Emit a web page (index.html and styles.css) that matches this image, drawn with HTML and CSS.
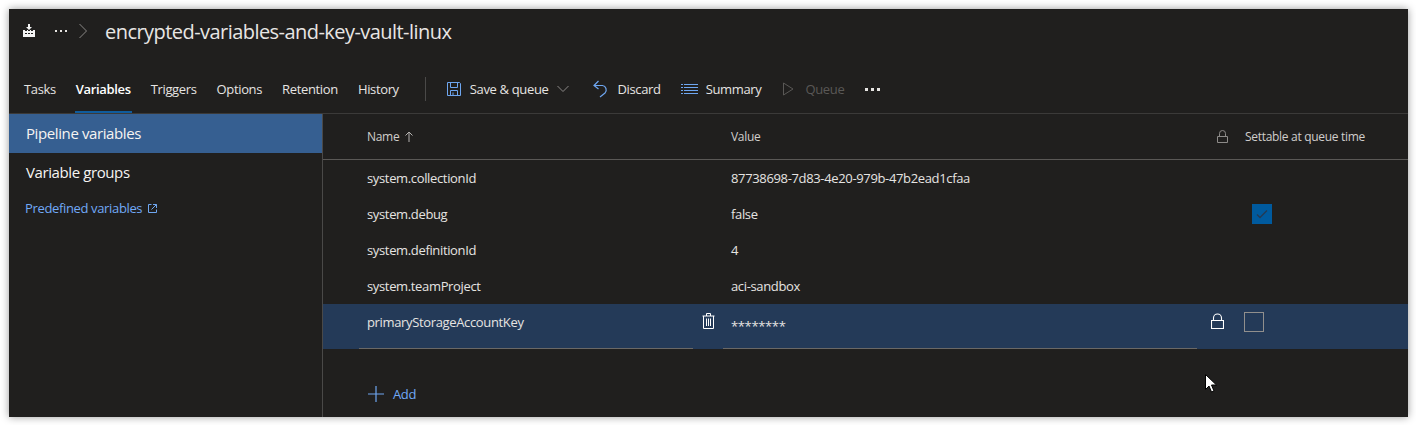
FILE: index.html
```html
<!doctype html>
<html lang="en">
  <head>
    <meta charset="UTF-8" />
    <title>encrypted-variables-and-key-vault-linux</title>
    <link rel="stylesheet" href="styles.css">
  </head>
  <body>
    <div class="window">
      <header class="title-bar">
        <svg class="pipeline-icon" width="14" height="14" viewBox="0 0 14 14">
          <path fill="#f4f4f4" d="M6 0h2v3h2L7 6 4 3h2zM1 6h2v1h2V6h1v1h2V6h1v1h2V6h2v7H1zm2 3v1h2V9zm3 0v1h2V9zm3 0v1h2V9z" />
        </svg>
        <span class="crumb-more">
          <i></i><i></i><i></i>
        </span>
        <svg class="crumb-chevron" width="10" height="16" viewBox="0 0 10 16">
          <path fill="none" stroke="#8a8886" d="M1.500 1l7 7-7 7" />
        </svg>
        <h1>encrypted-variables-and-key-vault-linux</h1>
      </header>

      <nav class="toolbar">
        <a class="tab">Tasks</a>
        <a class="tab active">Variables</a>
        <a class="tab">Triggers</a>
        <a class="tab">Options</a>
        <a class="tab">Retention</a>
        <a class="tab">History</a>
        <span class="divider"></span>
        <button class="cmd save">
          <svg width="16" height="16" viewBox="0 0 16 16" fill="none" stroke="#6ea6f0">
            <path d="M1.500 1.500h12l1 1v12h-13z" />
            <path d="M4.500 1.500v5h7v-5M4.500 14.500v-5h7v5M7 11.500v3" />
          </svg>
          Save &amp; queue
          <svg class="caret" width="12" height="8" viewBox="0 0 12 8">
            <path fill="none" stroke="#8a8886" d="M.5 1l5.500 5.500L11.500 1" />
          </svg>
        </button>
        <button class="cmd discard">
          <svg width="16" height="18" viewBox="0 0 16 18" fill="none" stroke="#6ea6f0" stroke-width="1.200">
            <path d="M1.500 5.500h8a4.500 4.500 0 0 1 2.500 7.500L7 17" />
            <path d="M5.500 1l-4.500 4.500 4.500 3.500" />
          </svg>
          Discard
        </button>
        <button class="cmd summary">
          <svg width="17" height="12" viewBox="0 0 17 12" fill="none" stroke="#6ea6f0">
            <path d="M0 1.500h2M3 1.500h14M0 4.500h2M3 4.500h14M0 7.500h2M3 7.500h14M0 10.500h2M3 10.500h14" />
          </svg>
          Summary
        </button>
        <button class="cmd queue">
          <svg width="11" height="14" viewBox="0 0 11 14">
            <path fill="none" stroke="#5a5856" d="M.5 1l9.500 6-9.500 6z" />
          </svg>
          Queue
        </button>
        <span class="toolbar-more">
          <i></i><i></i><i></i>
        </span>
      </nav>

      <div class="content">
        <aside class="sidebar">
          <a class="side-item selected">Pipeline variables</a>
          <a class="side-item">Variable groups</a>
          <a class="side-link">
            Predefined variables
            <svg width="9" height="9" viewBox="0 0 9 9" fill="none" stroke="#6ea6f0">
              <path d="M3.500.5h-3v8h8v-3M5 .5h3.500V4M8.500.5L3.500 5.500" />
            </svg>
          </a>
        </aside>

        <main class="grid-area">
          <div class="row head">
            <span class="col-name">Name
              <svg class="sort" width="8" height="11" viewBox="0 0 8 11">
                <path fill="none" stroke="#b5b3b1" d="M4 11V1M.5 4.500L4 1l3.500 3.500" />
              </svg>
            </span>
            <span class="col-value">Value</span>
            <span class="col-lock">
              <svg width="11" height="13" viewBox="0 0 11 13" fill="none" stroke="#8d8b89">
                <path d="M.5 6.500h10v6H.5zM2.500 6.500V3.500a3 3 0 0 1 6 0v3" />
              </svg>
            </span>
            <span class="col-settable">Settable at queue time</span>
          </div>

          <div class="row">
            <span class="col-name">system.collectionId</span>
            <span class="col-value">87738698-7d83-4e20-979b-47b2ead1cfaa</span>
          </div>
          <div class="row">
            <span class="col-name">system.debug</span>
            <span class="col-value">false</span>
            <span class="col-lock"></span>
            <span class="col-settable">
              <span class="checkbox checked">
                <svg width="12" height="10" viewBox="0 0 12 10">
                  <path fill="none" stroke="#243a54" stroke-width="1.300" d="M1 5.500l3 3L11 1.500" />
                </svg>
              </span>
            </span>
          </div>
          <div class="row">
            <span class="col-name">system.definitionId</span>
            <span class="col-value">4</span>
          </div>
          <div class="row">
            <span class="col-name">system.teamProject</span>
            <span class="col-value">aci-sandbox</span>
          </div>

          <div class="row editing">
            <span class="col-name">
              <span class="field">primaryStorageAccountKey</span>
              <svg class="trash" width="13" height="16" viewBox="0 0 13 16" fill="none" stroke="#fff">
                <path d="M.5 3h12M4.500 3V.5h4V3M1.500 3v12.500h10V3M4.500 5.500v7.500M6.500 5.500v7.500M8.500 5.500v7.500" />
              </svg>
            </span>
            <span class="col-value">
              <span class="field secret">********</span>
            </span>
            <span class="col-lock">
              <svg width="13" height="16" viewBox="0 0 13 16" fill="none" stroke="#fff" stroke-width="1.100">
                <path d="M.5 7.500h12v8H.5zM2.500 7.500V5a4 4 0 0 1 8 0v2.500" />
              </svg>
            </span>
            <span class="col-settable">
              <span class="checkbox"></span>
            </span>
          </div>

          <a class="add">
            <svg width="16" height="16" viewBox="0 0 16 16">
              <path fill="none" stroke="#6ea6f0" stroke-width="1.200" d="M8 0v16M0 8h16" />
            </svg>
            Add
          </a>
        </main>
      </div>

      <svg class="cursor" width="12" height="20" viewBox="0 0 12 20">
        <path fill="#fff" stroke="#000" d="M.5.5v15l3.500-3.500 2.500 6 2.500-1-2.500-6h5z" />
      </svg>
    </div>
  </body>
</html>
```

FILE: styles.css
```css
* {
  box-sizing: border-box;
}

html,
body {
  margin: 0;
  height: 100%;
  background: #fff;
  overflow: hidden;
}

body {
  padding: 9px 8px 8px 9px;
  font-family: "Open Sans", "Noto Sans", sans-serif;
  font-size: 13px;
  color: #e6e4e2;
}

.window {
  position: relative;
  height: 408px;
  background: #201f1e;
  box-shadow: 0 0 8px rgba(0, 0, 0, 0.4);
  display: flex;
  flex-direction: column;
}

.title-bar {
  display: flex;
  align-items: center;
  height: 44px;
  padding-left: 13px;
}

.pipeline-icon {
  flex: none;
}

.crumb-more,
.toolbar-more {
  display: flex;
  gap: 3px;
}

.crumb-more {
  margin-left: 19px;
}

.crumb-more i,
.toolbar-more i {
  width: 2px;
  height: 2px;
  background: #e6e4e2;
}

.crumb-chevron {
  margin-left: 11px;
}

h1 {
  margin: 0 0 0 17px;
  font-size: 20px;
  font-weight: 400;
  letter-spacing: -0.55px;
  color: #e8e6e4;
}

.toolbar {
  display: flex;
  align-items: center;
  height: 61px;
  padding: 12px 0 0 15px;
  border-bottom: 1px solid #3b3a39;
}

.tab {
  position: relative;
  margin-right: 20px;
  letter-spacing: -0.35px;
  line-height: 24px;
  color: #e6e4e2;
}

.tab.active {
  font-weight: 600;
  color: #fff;
}

.tab.active::after {
  content: "";
  position: absolute;
  left: -1px;
  right: -1px;
  bottom: -12px;
  height: 2px;
  background: #0f5c9e;
}

.divider {
  width: 1px;
  height: 24px;
  margin: 0 20px 0 6px;
  background: #4a4948;
}

.cmd {
  display: flex;
  align-items: center;
  padding: 0;
  border: 0;
  background: none;
  font: inherit;
  letter-spacing: -0.35px;
  color: #e6e4e2;
}

.save svg:first-child {
  margin-right: 8px;
}

.caret {
  margin-left: 9px;
}

.discard {
  margin-left: 24px;
}

.discard svg {
  margin-right: 8px;
}

.summary {
  margin-left: 20px;
}

.summary svg {
  margin-right: 8px;
}

.queue {
  margin-left: 22px;
  color: #5a5856;
}

.queue svg {
  margin-right: 11px;
}

.toolbar-more {
  margin-left: 21px;
}

.toolbar-more i {
  width: 3px;
  height: 3px;
}

.content {
  flex: 1;
  display: flex;
}

.sidebar {
  flex: none;
  width: 314px;
  border-right: 1px solid #4a4948;
  display: flex;
  flex-direction: column;
}

.side-item {
  height: 39px;
  padding-left: 17px;
  font-size: 15px;
  line-height: 39px;
  letter-spacing: -0.4px;
  color: #f6f4f2;
}

.side-item.selected {
  background: #365f91;
}

.side-link {
  padding: 7px 0 0 16px;
  letter-spacing: -0.35px;
  color: #71a9f7;
}

.side-link svg {
  margin-left: 3px;
}

.grid-area {
  flex: 1;
  min-width: 0;
}

.row {
  display: flex;
  align-items: center;
  height: 36px;
  padding-left: 44px;
  letter-spacing: -0.35px;
}

.row.head {
  height: 46px;
  font-size: 12px;
  letter-spacing: -0.3px;
  border-bottom: 1px solid #5a5856;
  color: #d0cecc;
}

.sort {
  margin-left: 3px;
  vertical-align: -1px;
}

.col-name {
  flex: none;
  width: 364px;
  display: flex;
  align-items: center;
}

.head .col-name {
  display: block;
}

.col-value {
  flex: none;
  width: 469px;
}

.col-lock {
  flex: none;
  width: 45px;
  display: flex;
  justify-content: center;
}

.col-settable {
  flex: none;
  display: flex;
}

.row:not(.head):not(.editing) .col-settable {
  padding-left: 7px;
}

.checkbox {
  display: flex;
  align-items: center;
  justify-content: center;
  width: 20px;
  height: 20px;
  border: 1px solid #918f8d;
}

.checkbox.checked {
  border: 0;
  background: #005a9e;
}

.row.editing {
  height: 45px;
  margin-top: 0;
  background: #243a58;
  align-items: stretch;
}

.editing .col-name {
  align-items: stretch;
  margin-left: -8px;
  width: 372px;
}

.editing .field {
  display: block;
  flex: 1;
  padding: 9px 0 0 8px;
  border-bottom: 1px solid #6a6866;
  line-height: 18px;
}

.trash {
  flex: none;
  margin: 9px 16px 0 9px;
}

.editing .col-value {
  margin-left: -8px;
  width: 474px;
  display: flex;
}

.editing .secret {
  padding-top: 13px;
}

.editing .col-lock {
  padding-top: 9px;
  width: 40px;
  align-items: flex-start;
}

.editing .col-settable {
  padding: 8px 0 0 7px;
}

.add {
  display: flex;
  align-items: center;
  gap: 9px;
  margin: 36px 0 0 45px;
  line-height: 18px;
  letter-spacing: -0.35px;
  color: #71a9f7;
}

.cursor {
  position: absolute;
  left: 1196px;
  top: 365px;
}
```
